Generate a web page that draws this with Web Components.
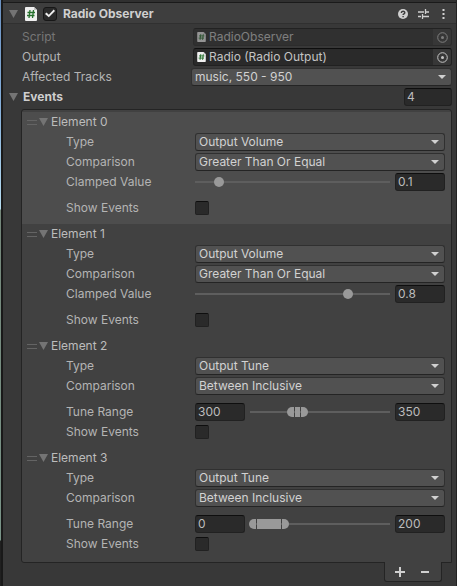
<!DOCTYPE html>
<html lang="en">
<head>
<meta charset="utf-8">
<title>Radio Observer</title>
<style>
body { margin: 0; background: #383838; color: #b4b4b4; font: 12px/18px Inter, "Liberation Sans", sans-serif; }
</style>
</head>
<body>
<inspector-panel>
  <component-header slot="header" name="Radio Observer"></component-header>
  <object-row label="Script" value="RadioObserver" disabled></object-row>
  <object-row label="Output" value="Radio (Radio Output)"></object-row>
  <dropdown-row label="Affected Tracks" value="music, 550 - 950" wide></dropdown-row>
  <event-list label="Events" count="4">
    <event-element name="Element 0" selected>
      <dropdown-row label="Type" value="Output Volume"></dropdown-row>
      <dropdown-row label="Comparison" value="Greater Than Or Equal"></dropdown-row>
      <slider-row label="Clamped Value" value="0.1"></slider-row>
      <toggle-row label="Show Events" spaced></toggle-row>
    </event-element>
    <event-element name="Element 1">
      <dropdown-row label="Type" value="Output Volume"></dropdown-row>
      <dropdown-row label="Comparison" value="Greater Than Or Equal"></dropdown-row>
      <slider-row label="Clamped Value" value="0.8"></slider-row>
      <toggle-row label="Show Events" spaced></toggle-row>
    </event-element>
    <event-element name="Element 2">
      <dropdown-row label="Type" value="Output Tune"></dropdown-row>
      <dropdown-row label="Comparison" value="Between Inclusive"></dropdown-row>
      <range-row label="Tune Range" low="300" high="350" spaced></range-row>
      <toggle-row label="Show Events"></toggle-row>
    </event-element>
    <event-element name="Element 3">
      <dropdown-row label="Type" value="Output Tune"></dropdown-row>
      <dropdown-row label="Comparison" value="Between Inclusive"></dropdown-row>
      <range-row label="Tune Range" low="0" high="200" spaced></range-row>
      <toggle-row label="Show Events"></toggle-row>
    </event-element>
  </event-list>
</inspector-panel>
<script>
const SHARED = `
  *, *::before, *::after { box-sizing: border-box; }
  :host { display: block; }
  :host([spaced]) { margin-top: 6px; }
  button, input, select { font: inherit; color: inherit; margin: 0; padding: 0; border: 0; background: none; min-width: 0; }
  button { display: flex; align-items: center; justify-content: center; }
  svg { display: block; flex: none; }
  .row { display: flex; align-items: center; height: 18px; }
  .row > label { flex: none; width: var(--label, 129px); white-space: nowrap; }
  .box { height: 18px; padding: 0 2px; background: #2a2a2a; border: 1px solid #212121; border-top-color: #0e0e0e; border-radius: 3px; color: #bcbcbc; }
  .num { width: 50px; flex: none; }
  .track { height: 2px; background: #5e5e5e; }
  input[type=range] { appearance: none; display: block; height: 18px; }
`;
const FOLD = size => `<svg width="${size}" height="8" viewBox="0 0 9 8"><path d="M0 0h9L4.500 8z" fill="#747474"/></svg>`;
const SCRIPT_ICON = (w, h) => `<svg width="${w}" height="${h}" viewBox="0 0 12 14"><path d="M1 0h8l3 3v10q0 1-1 1H1q-1 0-1-1V1q0-1 1-1z" fill="#f0f0f0"/><path d="M9 0v3h3z" fill="#c2c2c2"/><path d="M5 3L4 11M8.500 3l-1 8M2.500 5.500h7.500M2 8.500h7.500" stroke="#26702d" stroke-width="1.300" fill="none"/></svg>`;

class Part extends HTMLElement {
  connectedCallback() {
    if (this.shadowRoot) return;
    this.attachShadow({ mode: "open" }).innerHTML = `<style>${SHARED}${this.css()}</style>${this.html()}`;
    this.ready();
  }
  at(name) { return this.getAttribute(name) || ""; }
  css() { return ""; }
  html() { return ""; }
  ready() {}
}

customElements.define("inspector-panel", class extends Part {
  css() { return `
    :host { display: grid; grid-template-columns: 1px 2px 1fr; min-height: 100vh; }
    .scene { background: linear-gradient(#6b91c1 0, #82acd8 100px, #b6dcf0 209px, #74877a 210px, #799488 540px, #202020 541px); }
    .gap { background: #191919; }
    main { background: #383838; border-right: 1px solid #232323; min-width: 0; }
    .body { display: flex; flex-direction: column; gap: 2px; padding: 4px 4px 3px 19px; }
  `; }
  html() { return `<div class="scene"></div><div class="gap"></div><main><slot name="header"></slot><div class="body"><slot></slot></div></main>`; }
});

customElements.define("component-header", class extends Part {
  css() { return `
    header { display: flex; align-items: center; height: 24px; padding: 3px 7px 1px 6px; background: #3e3e3e; border-top: 2px solid #303030; border-bottom: 1px solid #303030; box-shadow: inset 0 1px #1a1a1a; color: #cfcfcf; }
    .fold { width: 9px; margin-right: 7px; }
    .check { appearance: none; width: 14px; height: 14px; margin: 0 6px; border: 1px solid #171717; border-radius: 3px; background: #2a2a2a; display: grid; place-items: center; }
    .check:checked::before { content: ""; width: 10px; height: 10px; background: #eee; clip-path: polygon(0 55%, 15% 40%, 38% 62%, 87% 10%, 100% 24%, 38% 88%); }
    h1 { flex: 1; margin: 0; font-size: 12px; line-height: 18px; font-weight: 700; }
    h1 label { display: block; }
    .tools { display: flex; gap: 10px; margin-right: 1px; }
    .tools button { height: 14px; }
  `; }
  html() { return `<header>
    <button class="fold" aria-label="Fold">${FOLD(9)}</button>${SCRIPT_ICON(12, 14)}
    <input class="check" type="checkbox" id="on" checked>
    <h1><label for="on">${this.at("name")}</label></h1>
    <div class="tools">
      <button aria-label="Help"><svg width="10" height="10" viewBox="0 0 10 10"><circle cx="5" cy="5" r="5" fill="#d0d0d0"/><path d="M3.300 3.900C3.300 1.700 6.800 1.700 6.800 3.700C6.800 4.900 5.100 4.800 5.100 6.100" fill="none" stroke="#3c3c3c" stroke-width="1.400"/><path d="M4.400 7h1.400v1.300H4.400z" fill="#3c3c3c"/></svg></button>
      <button aria-label="Presets"><svg width="11" height="10" viewBox="0 0 11 10"><path d="M0 3h6M8 3h3M7.500 0v5M0 7.500h3M5 7.500h6M4.500 5v5" stroke="#d0d0d0" stroke-width="1.300" fill="none"/></svg></button>
      <button aria-label="More"><svg width="9" height="10" viewBox="0 0 9 10"><path d="M3.500 0h2v2h-2zM3.500 4h2v2h-2zM3.500 8h2v2h-2z" fill="#d0d0d0"/></svg></button>
    </div></header>`; }
});

customElements.define("object-row", class extends Part {
  css() { return `
    :host { --label: 171px; }
    :host([disabled]) .row { opacity: .5; }
    .box { flex: 1; min-width: 0; display: flex; align-items: center; gap: 3px; padding: 0 0 0 3px; }
    input { flex: 1; font-size: 12px; color: #c4c4c4; }
    .pick { width: 18px; height: 16px; background: #373737; border-radius: 0 2px 2px 0; }
  `; }
  html() { const off = this.hasAttribute("disabled") ? "disabled" : ""; return `<div class="row"><label for="f">${this.at("label")}</label>
    <div class="box">${SCRIPT_ICON(9, 10)}<input id="f" value="${this.at("value")}" readonly ${off}>
    <button class="pick" aria-label="Pick object" ${off}><svg width="11" height="11" viewBox="0 0 11 11"><circle cx="5.500" cy="5.500" r="4.800" fill="none" stroke="#c4c4c4"/><circle cx="5.500" cy="5.500" r="1.500" fill="#c4c4c4"/></svg></button></div></div>`; }
});

customElements.define("dropdown-row", class extends Part {
  css() { return `
    :host([wide]) { --label: 169px; }
    .wrap { flex: 1; min-width: 0; display: grid; align-items: center; }
    .wrap > * { grid-area: 1 / 1; }
    select { appearance: none; width: 100%; height: 18px; padding: 0 20px 0 3px; background-color: #515151; border: 1px solid #303030; border-bottom-color: #242424; border-radius: 3px; color: #d2d2d2; line-height: 16px; }
    svg { justify-self: end; margin-right: 6px; pointer-events: none; }
  `; }
  html() { return `<div class="row"><label for="f">${this.at("label")}</label><div class="wrap">
    <select id="f"><option>${this.at("value")}</option></select>
    <svg width="8" height="4" viewBox="0 0 8 4"><path d="M0 0h8L4 4z" fill="#d0d0d0"/></svg></div></div>`; }
});

customElements.define("slider-row", class extends Part {
  css() { return `
    .wrap { flex: 1; min-width: 0; margin-right: 5px; display: grid; align-items: center; }
    .wrap > * { grid-area: 1 / 1; min-width: 0; }
    input[type=range] { width: 100%; }
    input[type=range]::-webkit-slider-thumb { appearance: none; width: 10px; height: 10px; border-radius: 50%; background: #999; }
  `; }
  html() { const v = this.at("value"); return `<div class="row"><label for="f">${this.at("label")}</label>
    <div class="wrap"><div class="track"></div><input type="range" id="s" aria-label="${this.at("label")}" min="0" max="1" step="0.01" value="${v}"></div>
    <input class="box num" id="f" value="${v}"></div>`; }
  ready() {
    const s = this.shadowRoot.getElementById("s"), f = this.shadowRoot.getElementById("f");
    s.addEventListener("input", () => f.value = s.value);
    f.addEventListener("change", () => s.value = f.value);
  }
});

customElements.define("range-row", class extends Part {
  css() { return `
    .wrap { flex: 1; min-width: 0; margin: 0 4px; display: grid; align-items: center; }
    .wrap > * { grid-area: 1 / 1; min-width: 0; }
    .track { margin: 0 1px; }
    .fill { height: 10px; background: #999; margin-left: calc((100% - 14px) * var(--lo) + 8px); margin-right: calc((100% - 14px) * (1 - var(--hi)) + 8px); }
    input[type=range] { width: calc(100% - 7px); pointer-events: none; }
    input[type=range]::-webkit-slider-thumb { appearance: none; pointer-events: auto; width: 7px; height: 10px; background: #999; border-radius: 5px 0 0 5px; }
    .hi { justify-self: end; }
    input.hi::-webkit-slider-thumb { border-radius: 0 5px 5px 0; }
  `; }
  html() { const l = this.at("label"), a = this.at("low"), b = this.at("high"); return `<div class="row"><label for="lo">${l}</label>
    <input class="box num" id="lo" value="${a}">
    <div class="wrap" style="--lo:${a / 1000};--hi:${b / 1000}"><div class="track"></div><div class="fill"></div>
      <input type="range" class="lo" aria-label="${l} minimum" min="0" max="1000" value="${a}">
      <input type="range" class="hi" aria-label="${l} maximum" min="0" max="1000" value="${b}"></div>
    <input class="box num" id="hi" aria-label="${l} maximum value" value="${b}"></div>`; }
  ready() {
    const wrap = this.shadowRoot.querySelector(".wrap");
    for (const k of ["lo", "hi"]) {
      const s = wrap.querySelector("." + k), f = this.shadowRoot.getElementById(k);
      const sync = () => { f.value = s.value; wrap.style.setProperty("--" + k, s.value / 1000); };
      s.addEventListener("input", sync);
      f.addEventListener("change", () => { s.value = f.value; sync(); });
    }
  }
});

customElements.define("toggle-row", class extends Part {
  css() { return `
    input { appearance: none; width: 14px; height: 14px; background: #2a2a2a; border: 1px solid #212121; border-top-color: #0e0e0e; border-radius: 2px; }
    input:checked { background: #999; }
  `; }
  html() { return `<div class="row"><label for="f">${this.at("label")}</label><input type="checkbox" id="f"></div>`; }
});

customElements.define("event-element", class extends Part {
  css() { return `
    :host { padding: 1px 6px 7px 5px; }
    :host([selected]) { background: #4d4d4d; }
    .head { display: flex; align-items: center; height: 18px; color: #bcbcbc; }
    .grip { width: 10px; height: 5px; border: solid #646464; border-width: 1px 0; margin-right: 2px; }
    .fold { width: 9px; margin-right: 3px; }
    .rows { display: flex; flex-direction: column; gap: 2px; padding: 2px 0 0 39px; }
  `; }
  html() { return `<div class="head"><span class="grip"></span><button class="fold" aria-label="Fold">${FOLD(9)}</button>${this.at("name")}</div><div class="rows"><slot></slot></div>`; }
});

customElements.define("event-list", class extends Part {
  css() { return `
    :host { margin-left: -13px; }
    .head { display: flex; align-items: center; height: 18px; margin-bottom: 3px; }
    .fold { width: 9px; margin-right: 5px; }
    .head label { flex: 1; font-size: 12px; font-weight: 700; color: #cfcfcf; }
    .head .num { width: 48px; }
    .list { margin-left: 12px; padding: 2px 0; background: #414141; border: 1px solid #242424; border-radius: 3px 3px 0 3px; }
    .foot { display: flex; width: 58px; height: 20px; margin: -1px 10px 0 auto; padding: 0 4px 0 2px; background: #414141; border: 1px solid #242424; border-top: 0; border-radius: 0 0 3px 3px; position: relative; }
    .foot button { flex: 1; }
  `; }
  html() { return `<div class="head"><button class="fold" aria-label="Fold">${FOLD(9)}</button><label for="n">${this.at("label")}</label><input class="box num" id="n" value="${this.at("count")}"></div>
    <div class="list"><slot></slot></div>
    <div class="foot"><button aria-label="Add"><svg width="10" height="10" viewBox="0 0 10 10"><path d="M0 5h10M5 0v10" stroke="#d0d0d0" stroke-width="2"/></svg></button><button aria-label="Remove"><svg width="8" height="2" viewBox="0 0 8 2"><path d="M0 0h8v2H0z" fill="#d0d0d0"/></svg></button></div>`; }
});
</script>
</body>
</html>
